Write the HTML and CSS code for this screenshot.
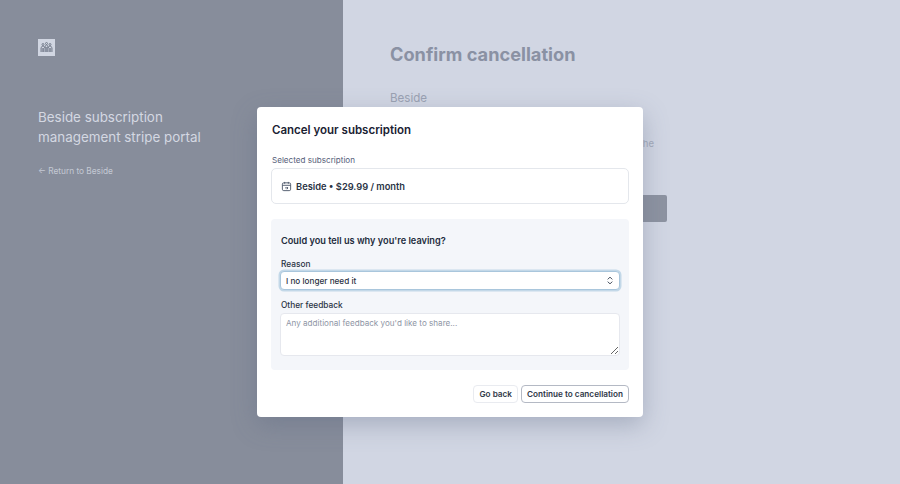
FILE: index.html
```html
<!DOCTYPE html>
<html lang="en">
    <head>
        <meta charset="UTF-8" />
        <title>Cancel your subscription</title>
        <link rel="stylesheet" href="styles.css">
    </head>

    <body>
        <div class="page">
            <aside class="side">
                <div class="logo">
                    <svg viewBox="0 0 17 17" width="17" height="17" fill="none" stroke="#666d7d" stroke-width="0.8">
                        <circle cx="5" cy="5.500" r="1" />
                        <circle cx="8.500" cy="4.500" r="1" />
                        <circle cx="12" cy="5.500" r="1" />
                        <path d="M3 13V9q.5-2 2-2t2 2M7 13V8q.3-2 1.500-2t1.500 2V13M10 9q.5-2 2-2t2 2V13M4.200 13V9M5.400 13V9M8 13V8M9 13V8M11.700 13V9M12.800 13V9" />
                    </svg>
                </div>
                <h2 class="side-title">Beside subscription management stripe portal</h2>
                <a class="back" href="#">&larr; Return to Beside</a>
            </aside>

            <main class="content">
                <h1>Confirm cancellation</h1>
                <p class="product">Beside</p>
                <p class="note">Your subscription will be cancelled at the</p>
                <div class="confirm"></div>
            </main>
        </div>

        <div class="modal">
            <h3>Cancel your subscription</h3>

            <p class="selected-label">Selected subscription</p>
            <div class="selected">
                <svg viewBox="0 0 12 12" width="11" height="11" fill="none" stroke="#4a5568" stroke-width="1">
                    <rect x="1.500" y="2" width="9" height="8.500" rx="1.500" />
                    <path d="M1.500 4.700h9M4 1v2M8 1v2M4.500 7.500h3l-1 -1M7.500 7.500l-1 1.500" />
                </svg>
                <span>Beside &bull; $29.99 / month</span>
            </div>

            <div class="reason-box">
                <h4>Could you tell us why you're leaving?</h4>

                <label class="field-label reason-label">Reason</label>
                <div class="select">
                    <span>I no longer need it</span>
                    <svg viewBox="0 0 8 12" width="6" height="9" fill="none" stroke="#3a4454" stroke-width="1.300">
                        <path d="M1 4.500 4 1.500l3 3M1 7.500l3 3 3-3" />
                    </svg>
                </div>

                <label class="field-label feedback-label">Other feedback</label>
                <textarea placeholder="Any additional feedback you'd like to share..."></textarea>
            </div>

            <div class="actions">
                <button class="btn">Go back</button>
                <button class="btn btn-main">Continue to cancellation</button>
            </div>
        </div>
    </body>
</html>
```

FILE: styles.css
```css
* {
    margin: 0;
    padding: 0;
    box-sizing: border-box;
    font-family: Inter, "Liberation Sans", sans-serif;
}

body {
    overflow: hidden;
    height: 484px;
}

.page {
    display: flex;
    height: 484px;
}

.side {
    width: 343px;
    padding: 39px 38px 0;
    background-color: #878d9b;
}

.logo {
    width: 17px;
    height: 17px;
    background-color: #d1d6e2;
    margin-bottom: 51px;
}

.logo svg {
    display: block;
}

.side-title {
    width: 180px;
    font-size: 13.400px;
    line-height: 20px;
    font-weight: 400;
    color: #d4d8e2;
    margin-bottom: 17px;
}

.back {
    display: block;
    font-size: 8.300px;
    line-height: 14px;
    color: #c4c9d4;
    text-decoration: none;
}

.content {
    flex: 1;
    padding: 42px 0 0 47px;
    background-color: #d1d6e3;
}

.content h1 {
    font-size: 18.200px;
    line-height: 24px;
    font-weight: 700;
    color: #8a91a3;
    margin-bottom: 24px;
}

.product {
    font-size: 11.600px;
    line-height: 16px;
    color: #9aa1b2;
    margin-bottom: 31px;
}

.note {
    width: 264px;
    font-size: 9.500px;
    line-height: 14px;
    color: #a3aaba;
    text-align: right;
    white-space: nowrap;
    margin-bottom: 44px;
}

.confirm {
    width: 277px;
    height: 27px;
    border-radius: 2px;
    background-color: #8d93a1;
}

.modal {
    position: absolute;
    left: 257px;
    top: 107px;
    width: 386px;
    height: 310px;
    padding: 14px 14px 0;
    border-radius: 4px;
    background-color: #fff;
    box-shadow: 0 8px 24px rgba(90, 100, 125, 0.35);
}

.modal h3 {
    font-size: 11.500px;
    line-height: 18px;
    font-weight: 600;
    color: #1a2233;
    margin: 0 0 15px 1px;
}

.selected-label {
    font-size: 8.100px;
    line-height: 12px;
    color: #56607a;
    margin: 0 0 2px 1px;
}

.selected {
    display: flex;
    align-items: center;
    gap: 4px;
    height: 36px;
    padding-left: 9px;
    border: 1px solid #e4e7ec;
    border-radius: 5px;
    font-size: 9.300px;
    font-weight: 600;
    color: #2a3344;
    margin-bottom: 15px;
}

.reason-box {
    height: 151px;
    padding: 15px 9px 0;
    border-radius: 4px;
    background-color: #f4f6fa;
}

.reason-box h4 {
    font-size: 9.200px;
    line-height: 14px;
    font-weight: 600;
    color: #232c3d;
    margin: 0 0 10px 1px;
}

.field-label {
    display: block;
    font-size: 8.300px;
    line-height: 12px;
    font-weight: 500;
    color: #2a3344;
    margin: 0 0 2px 1px;
}

.reason-label {
    margin-bottom: 1px;
}

.feedback-label {
    margin-top: 9px;
}

.select {
    display: flex;
    align-items: center;
    justify-content: space-between;
    height: 19px;
    padding: 0 6px 0 5px;
    border: 1px solid #a9c6dc;
    box-shadow: 0 0 0 1.500px #c3d8e8;
    border-radius: 4px;
    background-color: #fff;
    font-size: 8.200px;
    font-weight: 500;
    color: #2a3344;
}

textarea {
    display: block;
    width: 100%;
    height: 43px;
    padding: 3px 5px;
    border: 1px solid #e6e8ee;
    border-radius: 4px;
    background-color: #fff;
    font-size: 8.100px;
    line-height: 12px;
    outline: none;
}

textarea::placeholder {
    color: #8e95a5;
}

.actions {
    display: flex;
    justify-content: flex-end;
    gap: 3px;
    margin-top: 15px;
}

.btn {
    height: 18px;
    padding: 0 5px;
    border: 1px solid #e9ebf0;
    border-radius: 4px;
    background-color: #fff;
    font-size: 8.200px;
    font-weight: 600;
    color: #2f3848;
}

.btn-main {
    border-color: #b4b9c4;
}
```
